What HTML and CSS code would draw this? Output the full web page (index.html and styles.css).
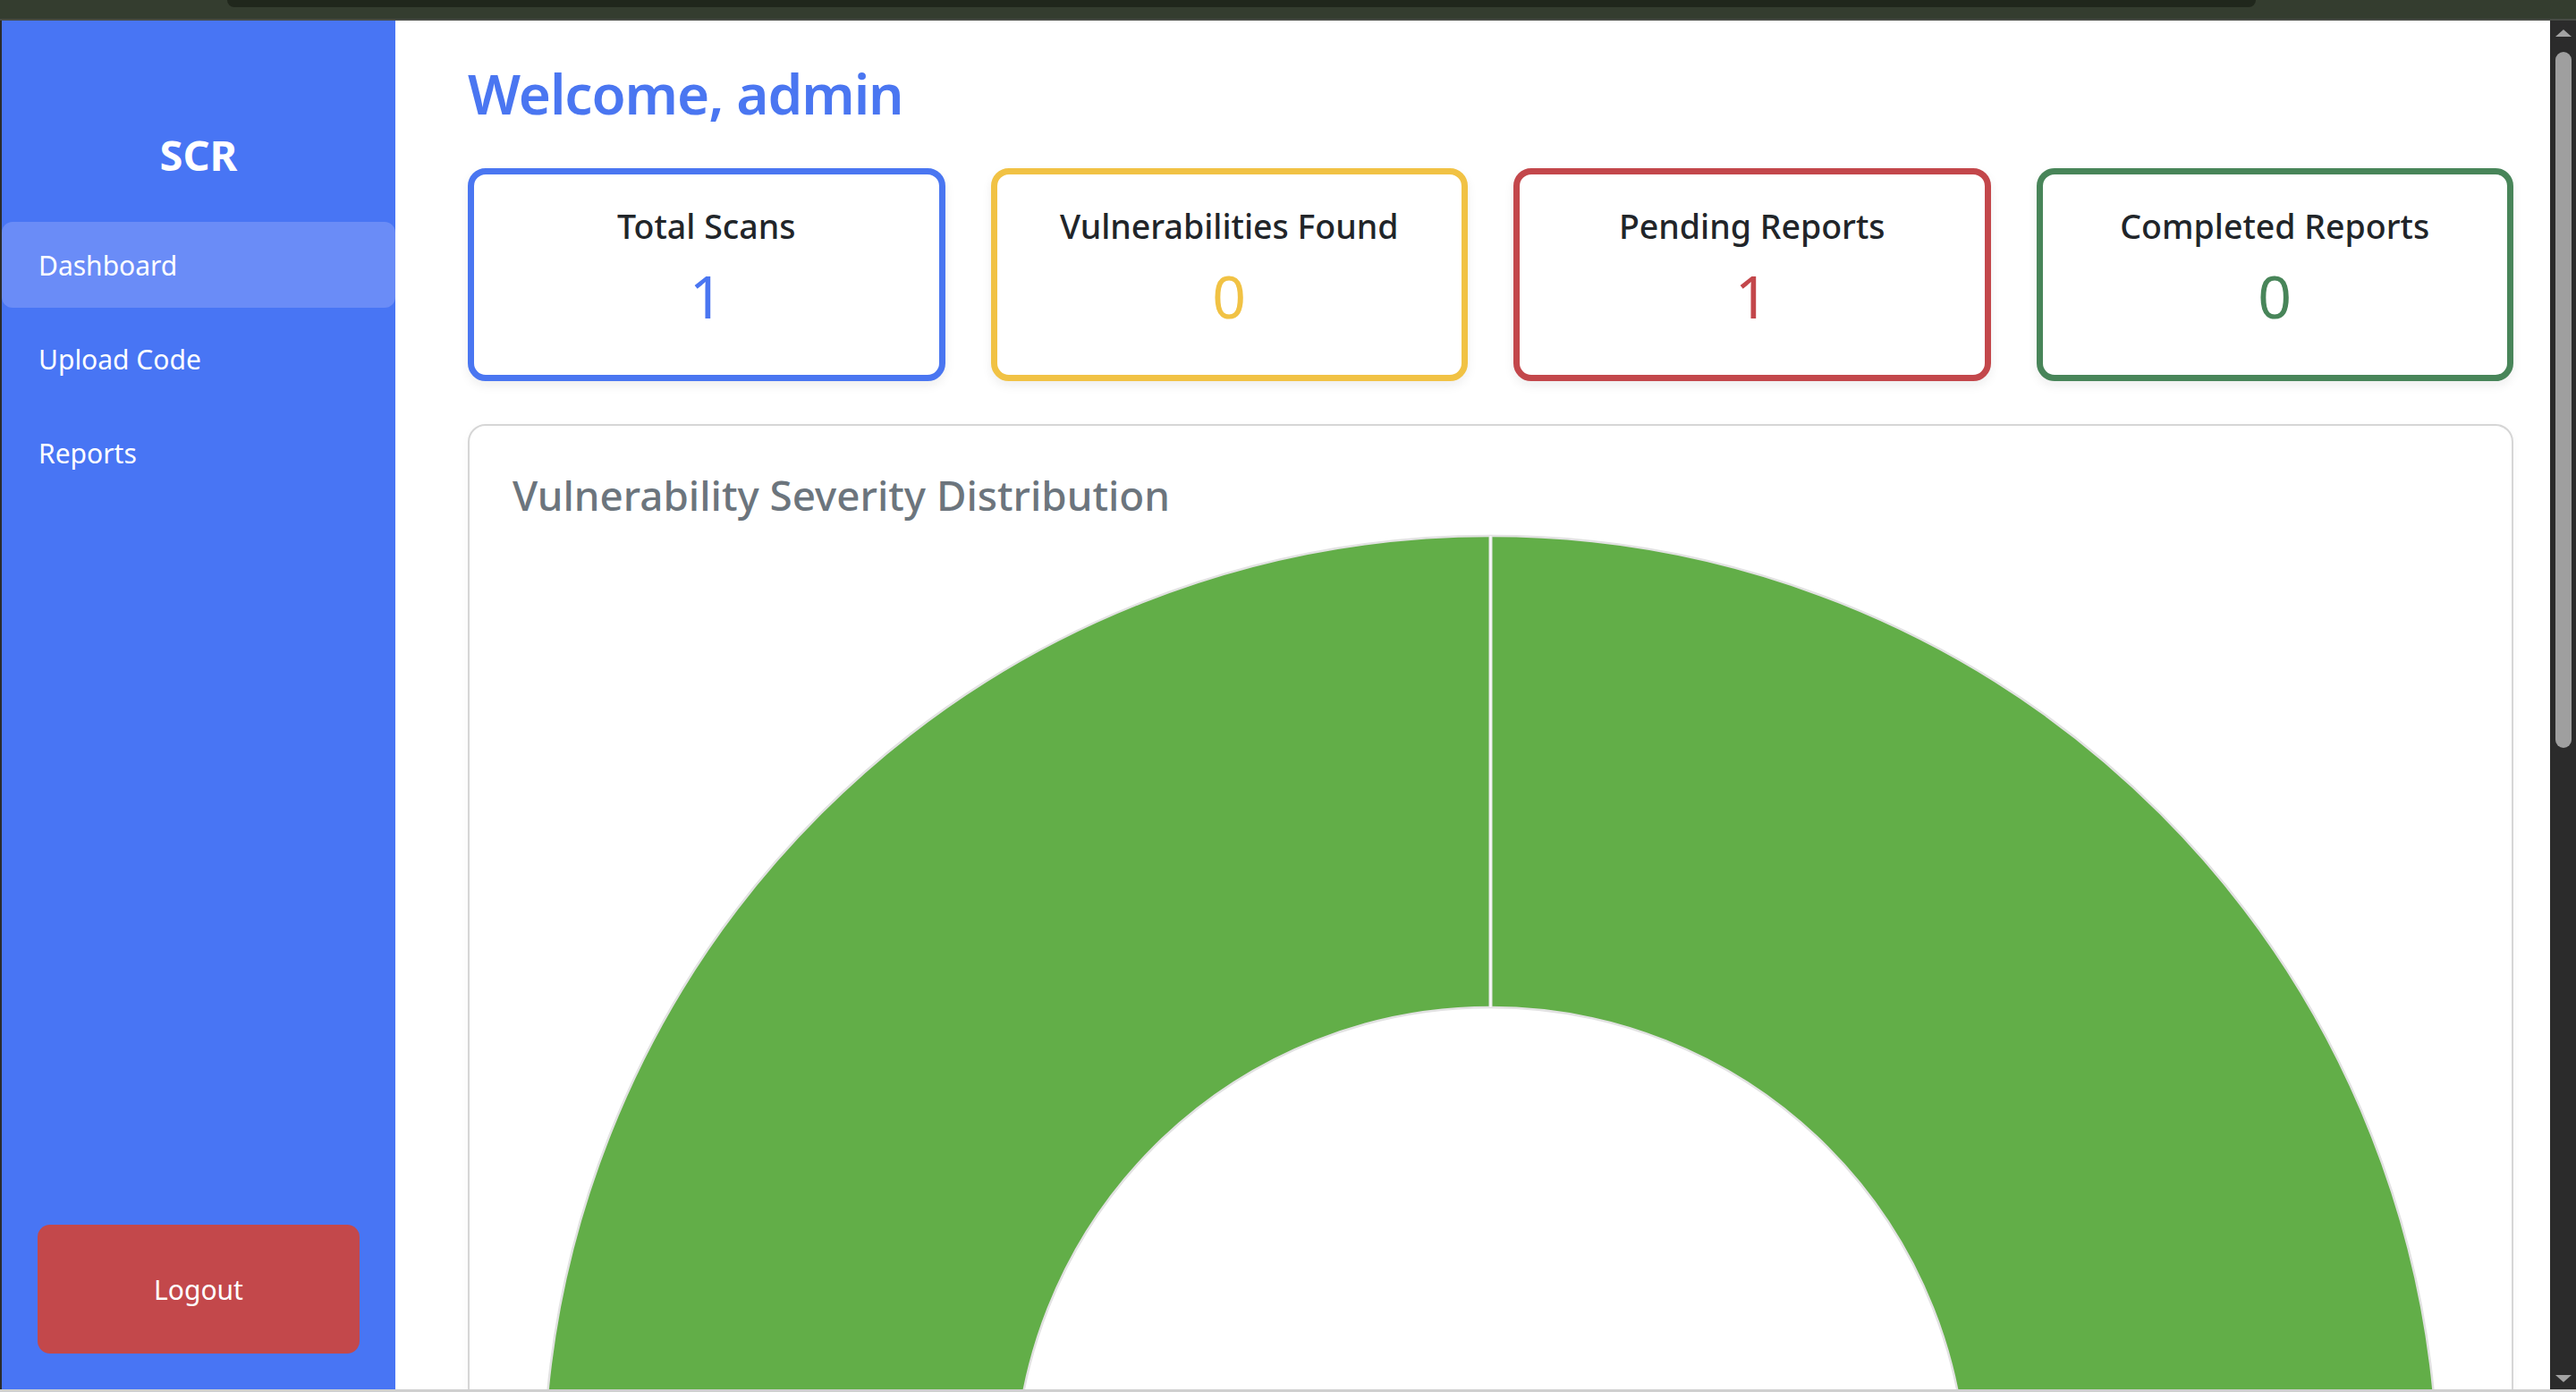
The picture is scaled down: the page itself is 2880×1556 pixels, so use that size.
FILE: index.html
```html
<!DOCTYPE html>
<html lang="en">
<head>
<meta charset="utf-8">
<title>SCR Dashboard</title>
<link rel="stylesheet" href="styles.css">
</head>
<body>
<div class="chrome"><div class="chrome-tab"></div></div>
<div class="window">
  <div class="edge"></div>
  <aside class="sidebar">
    <div class="brand">SCR</div>
    <nav class="nav">
      <a class="nav-item active">Dashboard</a>
      <a class="nav-item">Upload Code</a>
      <a class="nav-item">Reports</a>
    </nav>
    <div class="spacer"></div>
    <button class="logout">Logout</button>
  </aside>
  <main class="main">
    <h1 class="welcome">Welcome, admin</h1>
    <section class="stats">
      <div class="stat stat-blue"><h3 class="stat-label">Total Scans</h3><p class="stat-value">1</p></div>
      <div class="stat stat-yellow"><h3 class="stat-label">Vulnerabilities Found</h3><p class="stat-value">0</p></div>
      <div class="stat stat-red"><h3 class="stat-label">Pending Reports</h3><p class="stat-value">1</p></div>
      <div class="stat stat-green"><h3 class="stat-label">Completed Reports</h3><p class="stat-value">0</p></div>
    </section>
    <section class="chart-card">
      <h5 class="chart-title">Vulnerability Severity Distribution</h5>
      <svg class="chart" viewBox="0 0 2187 1100" width="2187" height="1100">
        <circle cx="1093.5" cy="1068" r="795.5" fill="none" stroke="#62ae48" stroke-width="527"/>
        <circle cx="1093.5" cy="1068" r="1059" fill="none" stroke="#e2e2e2" stroke-width="2.5"/>
        <circle cx="1093.5" cy="1068" r="532" fill="none" stroke="#e2e2e2" stroke-width="2.5"/>
        <line x1="1093.5" y1="9" x2="1093.5" y2="536" stroke="#e4e4e4" stroke-width="4"/>
        <line x1="1093.5" y1="9" x2="1093.5" y2="536" stroke="#f7f7f7" stroke-width="2"/>
      </svg>
    </section>
  </main>
  <div class="scrollbar">
    <div class="arrow-up"></div>
    <div class="thumb"></div>
    <div class="track-fill"></div>
    <div class="arrow-down"></div>
  </div>
</div>
<div class="bottom-line"></div>
</body>
</html>
```
FILE: styles.css
```css
* { box-sizing: border-box; }
html, body { margin: 0; padding: 0; }
body {
  width: 2880px;
  height: 1556px;
  overflow: hidden;
  font-family: "Noto Sans", "Open Sans", sans-serif;
  background: #ffffff;
  display: flex;
  flex-direction: column;
}

.chrome {
  height: 23px;
  flex: 0 0 23px;
  background: #343d2f;
  border-bottom: 2px solid #474b45;
  padding-left: 254px;
}
.chrome-tab {
  width: 2268px;
  height: 8px;
  background: #20271c;
  border-radius: 0 0 12px 12px;
}

.window {
  flex: 1 1 auto;
  display: flex;
  min-height: 0;
}
.edge { width: 2px; flex: 0 0 2px; background: #2b2b2b; }

.sidebar {
  width: 440px;
  flex: 0 0 440px;
  background: #4875f4;
  display: flex;
  flex-direction: column;
  padding-top: 122px;
  padding-bottom: 40px;
}
.brand {
  color: #ffffff;
  font-size: 47px;
  font-weight: 700;
  line-height: 1.2;
  text-align: center;
  margin-bottom: 47px;
}
.nav { display: flex; flex-direction: column; gap: 9px; }
.nav-item {
  height: 96px;
  display: flex;
  align-items: center;
  padding-left: 41px;
  color: #ffffff;
  font-size: 30px;
  border-radius: 12px;
}
.nav-item.active { background: #6a8cf7; }
.spacer { flex: 1 1 auto; }
.logout {
  margin: 0 40px;
  height: 144px;
  border: none;
  border-radius: 14px;
  background: #c3484b;
  color: #ffffff;
  font-family: "Noto Sans", "Open Sans", sans-serif;
  font-size: 30px;
}

.main {
  flex: 1 1 auto;
  min-width: 0;
  overflow: hidden;
  padding: 44px 41px 0 81px;
}
.welcome {
  margin: 0;
  color: #4a76f1;
  font-size: 62px;
  font-weight: 600;
  line-height: 1.2;
  letter-spacing: -1.1px;
}

.stats {
  margin-top: 47px;
  display: grid;
  grid-template-columns: repeat(4, 1fr);
  gap: 51px;
}
.stat {
  border: 7px solid;
  border-radius: 20px;
  background: #ffffff;
  text-align: center;
  padding: 35px 10px 48px;
  box-shadow: 0 5px 12px rgba(0, 0, 0, 0.07);
}
.stat-label {
  margin: 0 0 16px;
  color: #212529;
  font-size: 37.5px;
  font-weight: 500;
  line-height: 1.2;
}
.stat-value {
  margin: 0;
  font-size: 66px;
  font-weight: 400;
  line-height: 1.2;
}
.stat-blue { border-color: #4a76f1; }
.stat-blue .stat-value { color: #4a76f1; }
.stat-yellow { border-color: #f1c244; }
.stat-yellow .stat-value { color: #f1c244; }
.stat-red { border-color: #c3474b; }
.stat-red .stat-value { color: #c3474b; }
.stat-green { border-color: #488559; }
.stat-green .stat-value { color: #488559; }

.chart-card {
  margin-top: 48px;
  border: 2px solid #d6d6d6;
  border-radius: 20px;
  padding: 50px 48px 48px;
  box-shadow: 0 3px 10px rgba(0, 0, 0, 0.04);
}
.chart-title {
  margin: 0 0 9px;
  color: #6c757d;
  font-size: 45.8px;
  font-weight: 500;
  line-height: 1.2;
}
.chart { display: block; }

.scrollbar {
  width: 29px;
  flex: 0 0 29px;
  background: #2b2b2b;
  display: flex;
  flex-direction: column;
  align-items: center;
  padding: 10px 0 8px;
}
.arrow-up {
  width: 0; height: 0;
  border-left: 9px solid transparent;
  border-right: 9px solid transparent;
  border-bottom: 8px solid #a3a3a3;
  margin-left: 1px;
}
.thumb {
  margin-top: 17px;
  width: 18px;
  height: 778px;
  margin-left: 1px;
  background: #9f9f9f;
  border-radius: 9px;
}
.track-fill { flex: 1 1 auto; }
.arrow-down {
  width: 0; height: 0;
  border-left: 9px solid transparent;
  border-right: 9px solid transparent;
  border-top: 8px solid #a3a3a3;
  margin-left: 1px;
}

.bottom-line {
  height: 3px;
  flex: 0 0 3px;
  background: #cfcfcf;
}
```
